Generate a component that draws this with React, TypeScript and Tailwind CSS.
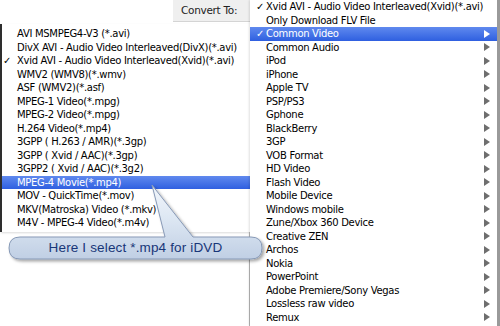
import React from 'react'

const leftItems = [
    'AVI MSMPEG4-V3 (*.avi)',
    'DivX AVI - Audio Video Interleaved(DivX)(*.avi)',
    'Xvid AVI - Audio Video Interleaved(Xvid)(*.avi)',
    'WMV2 (WMV8)(*.wmv)',
    'ASF (WMV2)(*.asf)',
    'MPEG-1 Video(*.mpg)',
    'MPEG-2 Video(*.mpg)',
    'H.264 Video(*.mp4)',
    '3GPP ( H.263 / AMR)(*.3gp)',
    '3GPP ( Xvid / AAC)(*.3gp)',
    '3GPP2 ( Xvid / AAC)(*.3g2)',
    'MPEG-4 Movie(*.mp4)',
    'MOV - QuickTime(*.mov)',
    'MKV(Matroska) Video (*.mkv)',
    'M4V - MPEG-4 Video(*.m4v)',
]

const rightItems = [
    { label: 'Xvid AVI - Audio Video Interleaved(Xvid)(*.avi)', check: true },
    { label: 'Only Download FLV File' },
    { label: 'Common Video', check: true, sub: true, active: true },
    { label: 'Common Audio', sub: true },
    { label: 'iPod', sub: true },
    { label: 'iPhone', sub: true },
    { label: 'Apple TV', sub: true },
    { label: 'PSP/PS3', sub: true },
    { label: 'Gphone', sub: true },
    { label: 'BlackBerry', sub: true },
    { label: '3GP', sub: true },
    { label: 'VOB Format', sub: true },
    { label: 'HD Video', sub: true },
    { label: 'Flash Video', sub: true },
    { label: 'Mobile Device', sub: true },
    { label: 'Windows mobile', sub: true },
    { label: 'Zune/Xbox 360 Device', sub: true },
    { label: 'Creative ZEN', sub: true },
    { label: 'Archos', sub: true },
    { label: 'Nokia', sub: true },
    { label: 'PowerPoint', sub: true },
    { label: 'Adobe Premiere/Sony Vegas', sub: true },
    { label: 'Lossless raw video', sub: true },
    { label: 'Remux', sub: true },
]

function Arrow({ active }: { active?: boolean }) {
    return (
        <svg width="6" height="8" viewBox="0 0 6 8" className="shrink-0">
            <path d="M0 0 L6 4 L0 8 Z" fill={active ? '#ffffff' : '#6e6e6e'} />
        </svg>
    )
}

function Callout() {
    return (
        <div className="absolute left-0 top-0 w-[500px] h-[326px] pointer-events-none">
            <svg width="500" height="326" className="absolute left-0 top-0">
                <defs>
                    <linearGradient id="pill" x1="0" y1="0" x2="0" y2="1">
                        <stop offset="0" stopColor="#f2f6fb" />
                        <stop offset="0.45" stopColor="#dde7f3" />
                        <stop offset="1" stopColor="#c0cfe4" />
                    </linearGradient>
                    <filter id="shadow" x="-10%" y="-30%" width="120%" height="160%">
                        <feDropShadow dx="2" dy="2" stdDeviation="1.5" floodColor="#000" floodOpacity="0.35" />
                    </filter>
                </defs>
                <path
                    d="M20 237 L165 237 L152 185 L193 237 L251 237 Q262 237 262 248 Q262 259 251 259 L20 259 Q9 259 9 248 Q9 237 20 237 Z"
                    fill="url(#pill)"
                    stroke="#8799b6"
                    strokeWidth="1"
                    filter="url(#shadow)"
                />
            </svg>
            <div className="absolute left-[9px] top-[237px] w-[253px] h-[22px] flex items-center justify-center text-[13.5px] text-[#183678] font-['Liberation_Sans',sans-serif] tracking-[0.15px]">
                Here I select *.mp4 for iDVD
            </div>
        </div>
    )
}

export default function App() {
    return (
        <div className="relative w-[500px] h-[326px] overflow-hidden bg-white flex text-[10px] tracking-[-0.3px] text-black font-['DejaVu_Sans',sans-serif]">
            {/* left column: label + first-level menu */}
            <div className="w-[250px] flex flex-col">
                <div className="h-[24px] flex justify-end">
                    <div className="w-[77px] h-[22px] bg-[#efefef] border-b border-[#d4d4d4] flex items-center pl-[8px] text-[10.5px] text-[#222]">
                        Convert To:
                    </div>
                </div>
                <div className="border-l-2 border-[#2e2e2e] bg-white pt-[3px] pb-[2px] shadow-[1px_1px_2px_rgba(0,0,0,0.15)]">
                    {leftItems.map((item, i) => {
                        const active = i === 11
                        return (
                            <div
                                key={item}
                                className={`h-[13.5px] flex items-center ${active ? 'bg-gradient-to-b from-[#6089ee] to-[#2f5fe0] text-white' : ''}`}
                            >
                                <span className="w-[15px] pl-[1px] text-[10px]">{i === 2 ? '✓' : ''}</span>
                                <span className="whitespace-nowrap">{item}</span>
                            </div>
                        )
                    })}
                </div>
                <div className="flex-1 border-r border-[#b8b8b8]" />
            </div>

            {/* right column: submenu */}
            <div className="w-[247px] bg-white shadow-[-1px_0_2px_rgba(0,0,0,0.12)] flex flex-col">
                {rightItems.map((item) => (
                    <div
                        key={item.label}
                        className={`h-[13.5px] flex items-center pr-[7px] ${item.active ? 'bg-gradient-to-b from-[#6089ee] to-[#2f5fe0] text-white' : ''}`}
                    >
                        <span className="w-[16px] pl-[6px] text-[10px]">{item.check ? '✓' : ''}</span>
                        <span className="flex-1 whitespace-nowrap">{item.label}</span>
                        {item.sub && <Arrow active={item.active} />}
                    </div>
                ))}
            </div>
            <div className="flex-1 bg-[#9a9a9a]" />

            <Callout />
        </div>
    )
}
